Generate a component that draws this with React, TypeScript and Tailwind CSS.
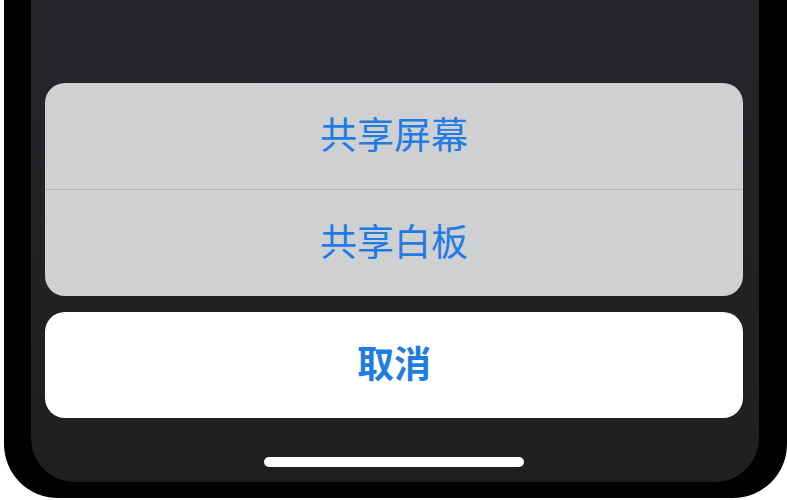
export default function App() {
  const options = ['共享屏幕', '共享白板'];

  return (
    <div
      className="w-[787px] h-[500px] bg-white overflow-hidden"
      style={{ fontFamily: '"Noto Sans CJK SC", "Noto Sans", sans-serif' }}
    >
      {/* phone frame */}
      <div className="ml-[4px] w-[783px] h-[498px] bg-black rounded-b-[54px] pl-[27px] pr-[28px] pb-[16px]">
        {/* screen */}
        <div className="h-full flex flex-col items-stretch rounded-b-[44px] bg-gradient-to-b from-[#252629] to-[#1f1f21] pt-[83px] pl-[14px] pr-[16px]">
          {/* option group */}
          <div className="flex flex-col rounded-[20px] bg-[#cfd0d1] overflow-hidden">
            {options.map((label, i) => (
              <div key={label} className="flex flex-col">
                {i > 0 && <div className="h-px bg-[#b8b9ba]" />}
                <button className="h-[106px] pb-[5px] flex items-center justify-center text-[37px] text-[#1f7ce3] leading-none">
                  {label}
                </button>
              </div>
            ))}
          </div>

          {/* cancel */}
          <button className="mt-[16px] h-[106px] pb-[5px] flex items-center justify-center rounded-[20px] bg-white text-[37px] font-bold text-[#1f7ce3] leading-none">
            取消
          </button>

          {/* home indicator */}
          <div className="mt-[39px] self-center w-[260px] h-[10px] rounded-full bg-white" />
        </div>
      </div>
    </div>
  );
}
